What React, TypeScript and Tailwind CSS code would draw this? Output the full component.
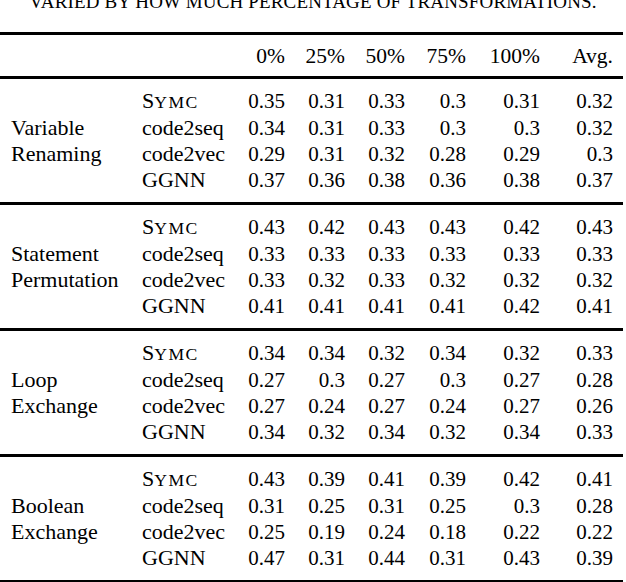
const groups = [
  {
    name: ["Variable", "Renaming"],
    rows: [
      ["symc", "0.35", "0.31", "0.33", "0.3", "0.31", "0.32"],
      ["code2seq", "0.34", "0.31", "0.33", "0.3", "0.3", "0.32"],
      ["code2vec", "0.29", "0.31", "0.32", "0.28", "0.29", "0.3"],
      ["GGNN", "0.37", "0.36", "0.38", "0.36", "0.38", "0.37"],
    ],
  },
  {
    name: ["Statement", "Permutation"],
    rows: [
      ["symc", "0.43", "0.42", "0.43", "0.43", "0.42", "0.43"],
      ["code2seq", "0.33", "0.33", "0.33", "0.33", "0.33", "0.33"],
      ["code2vec", "0.33", "0.32", "0.33", "0.32", "0.32", "0.32"],
      ["GGNN", "0.41", "0.41", "0.41", "0.41", "0.42", "0.41"],
    ],
  },
  {
    name: ["Loop", "Exchange"],
    rows: [
      ["symc", "0.34", "0.34", "0.32", "0.34", "0.32", "0.33"],
      ["code2seq", "0.27", "0.3", "0.27", "0.3", "0.27", "0.28"],
      ["code2vec", "0.27", "0.24", "0.27", "0.24", "0.27", "0.26"],
      ["GGNN", "0.34", "0.32", "0.34", "0.32", "0.34", "0.33"],
    ],
  },
  {
    name: ["Boolean", "Exchange"],
    rows: [
      ["symc", "0.43", "0.39", "0.41", "0.39", "0.42", "0.41"],
      ["code2seq", "0.31", "0.25", "0.31", "0.25", "0.3", "0.28"],
      ["code2vec", "0.25", "0.19", "0.24", "0.18", "0.22", "0.22"],
      ["GGNN", "0.47", "0.31", "0.44", "0.31", "0.43", "0.39"],
    ],
  },
];

const headers = ["0%", "25%", "50%", "75%", "100%", "Avg."];

const grid =
  "grid grid-cols-[142px_96px_47px_60px_60px_61px_74px_73px] leading-[26px]";

function Rule() {
  return <div className="h-[3px] w-[623px] bg-black" />;
}

function Method({ name }: { name: string }) {
  if (name === "symc") {
    return (
      <span>
        S<span className="text-[0.8em] tracking-[1.5px]">YMC</span>
      </span>
    );
  }
  return <span>{name}</span>;
}

export default function App() {
  return (
    <div
      className="w-[626px] h-[582px] overflow-hidden bg-white text-black text-[22px]"
      style={{ fontFamily: '"Liberation Serif", "Times New Roman", serif' }}
    >
      {/* caption, mostly cut off at the top */}
      <div className="h-[32px] overflow-hidden">
        <div className="-mt-[8px] text-center text-[19px] leading-none uppercase tracking-[0.15px]">
          Varied by how much percentage of transformations.
        </div>
      </div>

      <Rule />
      <div className={grid + " h-[41px] items-center text-[21.5px]"}>
        <div />
        <div />
        {headers.map((h) => (
          <div key={h} className="text-right">
            {h}
          </div>
        ))}
      </div>
      <Rule />

      {groups.map((g, gi) => (
        <div key={gi}>
          <div className={grid + " py-[9px]"}>
            <div className="row-span-4 pl-[11px] flex flex-col justify-center">
              {g.name.map((n) => (
                <div key={n}>{n}</div>
              ))}
            </div>
            {g.rows.map((r) => [
              <div key={r[0]}>
                <Method name={r[0]} />
              </div>,
              ...r.slice(1).map((v, i) => (
                <div key={r[0] + i} className="text-right text-[21px]">
                  {v}
                </div>
              )),
            ])}
          </div>
          <Rule />
        </div>
      ))}
    </div>
  );
}
